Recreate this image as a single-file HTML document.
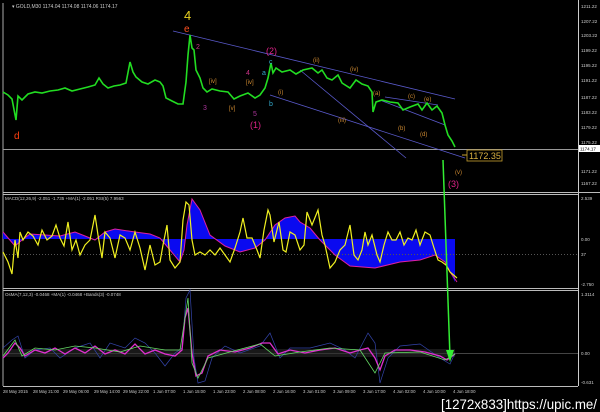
<!DOCTYPE html>
<html><head><meta charset="utf-8"><style>
html,body{margin:0;padding:0;background:#000;width:600px;height:412px;overflow:hidden}
svg{display:block}
text{font-family:"Liberation Sans",sans-serif}
</style></head><body>
<svg width="600" height="412" viewBox="0 0 600 412" xmlns="http://www.w3.org/2000/svg">
<rect width="600" height="412" fill="#000"/>
<line x1="3" y1="3" x2="3" y2="386" stroke="#aaa" stroke-width="1"/>
<line x1="578.5" y1="0" x2="578.5" y2="386" stroke="#ccc" stroke-width="1"/>
<line x1="3" y1="149.5" x2="578" y2="149.5" stroke="#999" stroke-width="1"/>
<line x1="3" y1="192.5" x2="600" y2="192.5" stroke="#bbb"/>
<line x1="3" y1="194.5" x2="578" y2="194.5" stroke="#bbb"/>
<line x1="3" y1="288.5" x2="578" y2="288.5" stroke="#bbb"/>
<line x1="3" y1="290.5" x2="578" y2="290.5" stroke="#bbb"/>
<line x1="3" y1="386.5" x2="578" y2="386.5" stroke="#bbb"/>
<text x="12" y="8" fill="#ccc" font-size="5">▾ GOLD,M30  1174.04 1174.08 1174.06 1174.17</text>
<g stroke="#5a5acc" stroke-width="0.8" fill="none">
<line x1="173" y1="31" x2="455" y2="99"/>
<line x1="270" y1="95" x2="465" y2="158"/>
<line x1="300" y1="70" x2="406" y2="158"/>
<line x1="380" y1="100" x2="445" y2="125"/>
<line x1="385" y1="97" x2="438" y2="105"/>
</g>
<polyline fill="none" stroke="#22dd22" stroke-width="1.6" points="3,92 8,95 12,99 16,120 18,96 22,100 28,94 35,92 42,93 50,91 58,90 65,88 72,91 80,89 88,87 95,85 99,78 103,84 108,88 114,86 120,85 126,83 130,62 133,72 136,77 142,82 148,84 155,80 160,82 163,86 166,98 172,101 178,104 183,104 186,82 188,55 190,35 192,48 194,50 196,70 200,78 203,88 207,92 212,89 220,91 228,92 234,99 240,96 248,93 255,98 260,95 265,88 268,78 271,63 273,73 276,68 282,72 290,70 296,74 303,70 312,68 318,73 322,70 327,78 332,80 338,75 342,83 350,88 356,80 362,84 368,86 372,92 373,112 376,102 382,100 390,102 398,103 403,110 410,107 418,104 422,110 427,103 432,110 437,106 442,113 445,125 448,135 452,141 455,147"/>
<g font-size="9">
<text x="184" y="20" fill="#e8d020" font-size="13">4</text>
<text x="184" y="32" fill="#ff5020" font-size="10">e</text>
<text x="14" y="139" fill="#ff4010" font-size="10">d</text>
<text x="196" y="49" fill="#cc3388" font-size="7">2</text>
<text x="203" y="110" fill="#aa3399" font-size="7">3</text>
<text x="209" y="83" fill="#cc8830" font-size="6">[iv]</text>
<text x="229" y="110" fill="#cc8830" font-size="6">[v]</text>
<text x="246" y="75" fill="#cc3388" font-size="7">4</text>
<text x="246" y="84" fill="#cc8830" font-size="6">[iv]</text>
<text x="253" y="116" fill="#aa3399" font-size="7">5</text>
<text x="250" y="128" fill="#dd2288" font-size="9">(1)</text>
<text x="262" y="75" fill="#33aacc" font-size="7">a</text>
<text x="269" y="64" fill="#33aacc" font-size="7">c</text>
<text x="269" y="106" fill="#33aacc" font-size="7">b</text>
<text x="266" y="54" fill="#dd2288" font-size="9">(2)</text>
<text x="278" y="94" fill="#cc8830" font-size="6">(i)</text>
<text x="313" y="62" fill="#cc8830" font-size="6">(ii)</text>
<text x="350" y="71" fill="#cc8830" font-size="6">(iv)</text>
<text x="338" y="122" fill="#cc8830" font-size="6">(iii)</text>
<text x="373" y="95" fill="#cc8830" font-size="6">(a)</text>
<text x="408" y="98" fill="#cc8830" font-size="6">(c)</text>
<text x="424" y="101" fill="#cc8830" font-size="6">(e)</text>
<text x="398" y="130" fill="#cc8830" font-size="6">(b)</text>
<text x="420" y="136" fill="#cc8830" font-size="6">(d)</text>
<text x="455" y="174" fill="#cc8830" font-size="6">(v)</text>
<text x="448" y="187" fill="#dd2288" font-size="9">(3)</text>
</g>
<rect x="467" y="150" width="35" height="11" fill="none" stroke="#c8a030" stroke-width="0.8"/>
<line x1="462" y1="155" x2="467" y2="155" stroke="#c8a030"/>
<text x="469" y="159" fill="#d8b040" font-size="9">1172.35</text>
<g fill="#ccc" font-size="4.5">
<text x="581" y="8">1211.22</text><text x="581" y="23">1207.22</text><text x="581" y="37">1203.22</text>
<text x="581" y="52">1199.22</text><text x="581" y="67">1195.22</text><text x="581" y="82">1191.22</text>
<text x="581" y="99">1187.22</text><text x="581" y="114">1183.22</text><text x="581" y="129">1179.22</text>
<text x="581" y="144">1175.22</text><text x="581" y="173">1171.22</text><text x="581" y="185">1167.22</text>
<text x="581" y="200">2.539</text><text x="581" y="241">0.00</text><text x="581" y="256">37</text><text x="581" y="286">-2.750</text>
<text x="581" y="296">1.3114</text><text x="581" y="355">0.00</text><text x="581" y="384">-0.631</text>
</g>
<rect x="579" y="145" width="21" height="7" fill="#fff"/>
<text x="580" y="150.5" fill="#000" font-size="4.5">1174.17</text>
<!-- MACD -->
<text x="5" y="200" fill="#ccc" font-size="4.5">MACD(12,26,9) -2.051 -1.735  +MA(1) -2.051  RSI(5) 7.9563</text>
<polygon fill="#0a0af0" points="3,239 3,232 15,246 22,240 30,234 45,235 60,236 75,232 85,236 95,240 105,232 115,229 135,232 150,234 160,238 170,250 180,262 184,250 187,225 192,199 200,210 210,235 225,246 240,252 255,248 265,240 275,225 285,218 295,216 300,222 310,228 320,240 335,255 350,266 375,268 400,262 420,260 435,255 445,262 450,272 455,282 455,239"/>
<polyline fill="none" stroke="#e020a0" stroke-width="1" points="3,232 15,246 22,240 30,234 45,235 60,236 75,232 85,236 95,240 105,232 115,229 135,232 150,234 160,238 170,250 180,262 184,250 187,225 192,199 200,210 210,235 225,246 240,252 255,248 265,240 275,225 285,218 295,216 300,222 310,228 320,240 335,255 350,266 375,268 400,262 420,260 435,255 445,262 450,272 457,282"/>
<line x1="3" y1="254.5" x2="578" y2="254.5" stroke="#555" stroke-dasharray="1,2"/>
<polyline fill="none" stroke="#f0f020" stroke-width="1.2" points="3,252 8,262 12,274 15,240 18,258 20,232 23,240 28,232 33,236 38,245 42,230 47,240 52,236 56,225 60,238 64,246 68,222 72,250 76,240 80,255 85,245 90,240 95,215 98,235 102,258 105,232 110,238 115,258 120,235 125,238 130,250 135,232 140,248 145,270 150,245 155,265 160,262 163,245 167,225 170,260 175,268 180,262 183,220 186,202 189,205 192,240 195,255 200,252 205,255 210,250 215,255 220,248 225,255 230,262 235,248 240,232 243,218 247,238 252,238 257,250 260,258 264,230 268,210 270,215 274,242 279,222 283,250 286,252 290,232 295,235 300,250 304,245 307,212 312,225 318,210 322,235 325,245 330,268 335,262 340,250 345,245 350,225 354,255 358,260 362,250 365,232 368,245 372,235 377,255 380,262 384,245 388,232 392,240 396,240 400,232 404,245 408,238 412,240 416,230 420,245 425,232 430,235 434,248 438,260 442,262 446,265 450,272 457,278"/>
<!-- Osc -->
<text x="5" y="296" fill="#ccc" font-size="4.5">OsMA(7,12,3) -0.0468  +MA(1) -0.0468  +Bands(3) -0.0748</text>
<line x1="3" y1="353.5" x2="578" y2="353.5" stroke="#444"/>
<rect x="3" y="349" width="452" height="8" fill="#2a2a2a" opacity="0.6"/>
<polyline fill="none" stroke="#3344aa" stroke-width="0.7" points="3,348 12,340 18,336 25,358 35,350 50,348 60,358 75,348 90,343 100,358 110,343 125,348 135,338 145,343 155,353 165,366 175,353 182,348 186,298 190,290 194,358 198,383 205,381 212,358 225,346 240,353 260,346 270,333 280,358 290,348 310,348 330,343 345,350 355,358 368,333 375,343 380,383 388,358 400,346 420,344 440,358 450,364 455,353"/>
<polyline fill="none" stroke="#e030d0" stroke-width="1.3" points="3,358 8,353 15,343 20,348 25,356 35,350 45,353 55,348 65,354 75,348 85,353 95,346 105,354 115,350 125,354 135,344 145,354 155,350 165,354 175,356 182,350 185,318 188,308 192,353 196,376 202,373 208,356 220,350 235,352 250,348 262,343 270,343 278,354 290,350 305,353 320,350 335,348 350,353 360,350 368,348 375,358 380,370 385,356 395,350 410,350 425,352 440,356 447,360 455,354"/>
<polyline fill="none" stroke="#66dd66" stroke-width="0.8" points="3,356 15,340 22,356 35,348 55,350 75,346 95,348 120,352 140,346 165,350 180,350 185,318 188,298 192,363 198,378 208,358 230,352 260,344 275,356 300,352 330,348 360,350 375,373 385,353 420,352 445,360 455,354"/>
<line x1="443" y1="160" x2="450" y2="357" stroke="#33ee33" stroke-width="1.5"/>
<polygon points="446,350 450,362 454,350" fill="#33ee33"/>
<g fill="#ccc" font-size="4.3">
<text x="3" y="393">28 May 2015</text><text x="33" y="393">28 May 21:00</text><text x="63" y="393">29 May 06:00</text>
<text x="94" y="393">29 May 14:00</text><text x="123" y="393">29 May 22:00</text><text x="153" y="393">1 Jun 07:00</text>
<text x="183" y="393">1 Jun 15:00</text><text x="213" y="393">1 Jun 23:00</text><text x="243" y="393">2 Jun 08:00</text>
<text x="273" y="393">2 Jun 16:00</text><text x="303" y="393">3 Jun 01:00</text><text x="333" y="393">3 Jun 09:00</text>
<text x="363" y="393">3 Jun 17:00</text><text x="393" y="393">4 Jun 02:00</text><text x="423" y="393">4 Jun 10:00</text>
<text x="453" y="393">4 Jun 18:00</text>
</g>
<text x="441" y="409" fill="#fff" font-size="14" font-family="Liberation Mono,monospace" textLength="156" lengthAdjust="spacingAndGlyphs">[1272x833]https://upic.me/</text>
</svg>
</body></html>
